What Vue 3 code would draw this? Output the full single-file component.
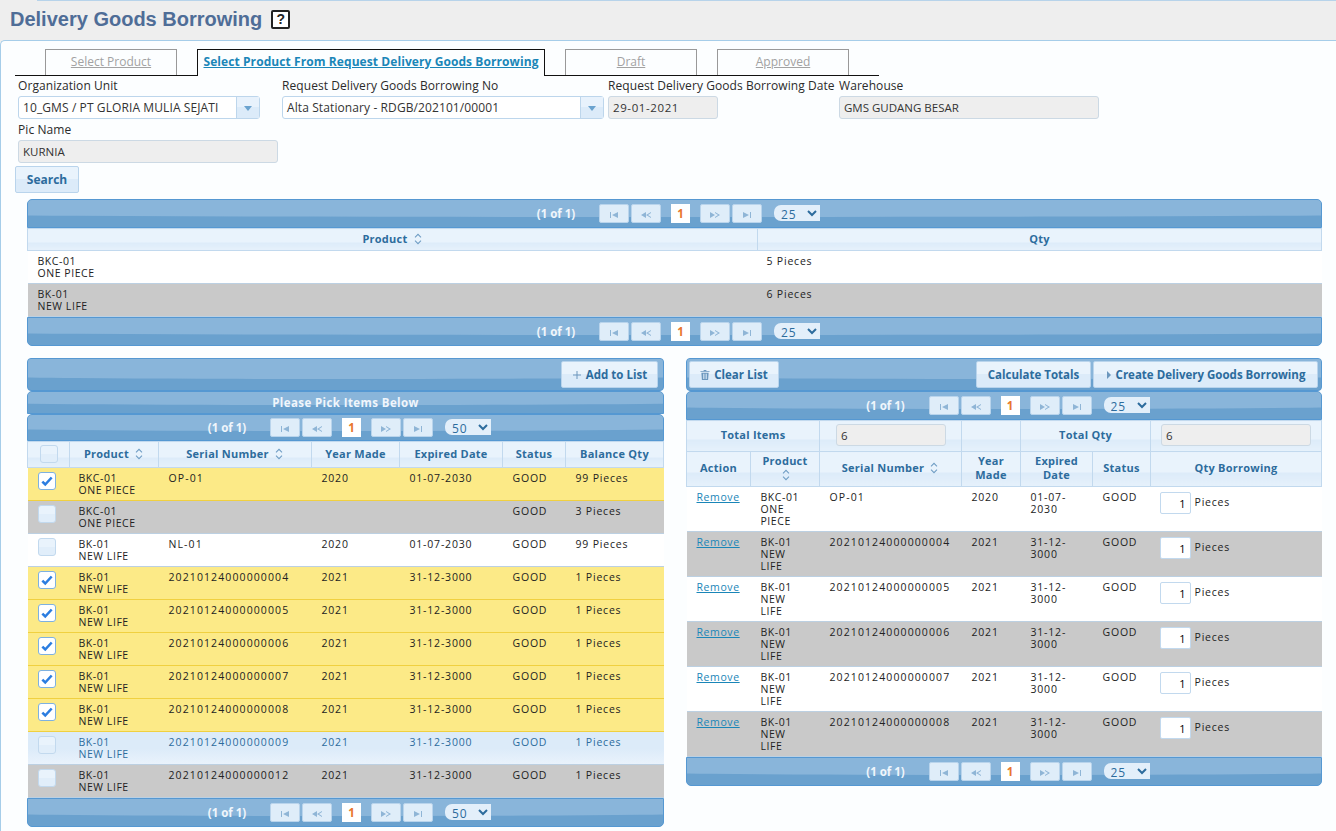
<script setup>
import { ref } from 'vue'

const tabs = [
  { label: 'Select Product' },
  { label: 'Select Product From Request Delivery Goods Borrowing', active: true },
  { label: 'Draft' },
  { label: 'Approved' }
]

const summary = [
  { code: 'BKC-01', name: 'ONE PIECE', qty: '5 Pieces' },
  { code: 'BK-01', name: 'NEW LIFE', qty: '6 Pieces' }
]

// kind: picked = kuning, hover = biru, sisanya selang-seling
const items = ref([
  { code: 'BKC-01', name: 'ONE PIECE', serial: 'OP-01', year: '2020', exp: '01-07-2030', bal: '99 Pieces', kind: 'picked' },
  { code: 'BKC-01', name: 'ONE PIECE', serial: '', year: '', exp: '', bal: '3 Pieces', kind: 'gray' },
  { code: 'BK-01', name: 'NEW LIFE', serial: 'NL-01', year: '2020', exp: '01-07-2030', bal: '99 Pieces', kind: 'white' },
  { code: 'BK-01', name: 'NEW LIFE', serial: '20210124000000004', year: '2021', exp: '31-12-3000', bal: '1 Pieces', kind: 'picked' },
  { code: 'BK-01', name: 'NEW LIFE', serial: '20210124000000005', year: '2021', exp: '31-12-3000', bal: '1 Pieces', kind: 'picked' },
  { code: 'BK-01', name: 'NEW LIFE', serial: '20210124000000006', year: '2021', exp: '31-12-3000', bal: '1 Pieces', kind: 'picked' },
  { code: 'BK-01', name: 'NEW LIFE', serial: '20210124000000007', year: '2021', exp: '31-12-3000', bal: '1 Pieces', kind: 'picked' },
  { code: 'BK-01', name: 'NEW LIFE', serial: '20210124000000008', year: '2021', exp: '31-12-3000', bal: '1 Pieces', kind: 'picked' },
  { code: 'BK-01', name: 'NEW LIFE', serial: '20210124000000009', year: '2021', exp: '31-12-3000', bal: '1 Pieces', kind: 'hover' },
  { code: 'BK-01', name: 'NEW LIFE', serial: '20210124000000012', year: '2021', exp: '31-12-3000', bal: '1 Pieces', kind: 'gray' }
])

const list = ref([
  { code: 'BKC-01', name: 'ONE PIECE', serial: 'OP-01', year: '2020', exp: '01-07-2030', qty: 1 },
  { code: 'BK-01', name: 'NEW LIFE', serial: '20210124000000004', year: '2021', exp: '31-12-3000', qty: 1 },
  { code: 'BK-01', name: 'NEW LIFE', serial: '20210124000000005', year: '2021', exp: '31-12-3000', qty: 1 },
  { code: 'BK-01', name: 'NEW LIFE', serial: '20210124000000006', year: '2021', exp: '31-12-3000', qty: 1 },
  { code: 'BK-01', name: 'NEW LIFE', serial: '20210124000000007', year: '2021', exp: '31-12-3000', qty: 1 },
  { code: 'BK-01', name: 'NEW LIFE', serial: '20210124000000008', year: '2021', exp: '31-12-3000', qty: 1 }
])
</script>

<template>
  <div class="page">
    <svg class="defs" width="0" height="0">
      <symbol id="first" viewBox="0 0 12 8"><path d="M2 1v6h1V1zM10 1 4 4l6 3z" /></symbol>
      <symbol id="prev" viewBox="0 0 12 8"><path d="M6 1 1 4l5 3zM11 1 6 4l5 3V6L8 4l3-2z" /></symbol>
      <symbol id="next" viewBox="0 0 12 8"><path d="M1 1v6l5-3zM6 1v1l3 2-3 2v1l5-3z" /></symbol>
      <symbol id="last" viewBox="0 0 12 8"><path d="M2 1v6l6-3zM9 1v6h1V1z" /></symbol>
      <symbol id="sort" viewBox="0 0 10 14">
        <path d="M1.500 5 5 1.500 8.500 5M1.500 9 5 12.500 8.500 9" fill="none" stroke="currentColor" stroke-width="1.200" />
      </symbol>
    </svg>

    <div class="topline"></div>
    <header class="head">
      <h1>Delivery Goods Borrowing</h1>
      <span class="help">?</span>
    </header>

    <main class="main">
      <nav class="tabs">
        <a v-for="t in tabs" :key="t.label" class="tab" :class="{ active: t.active }">{{ t.label }}</a>
      </nav>

      <div class="form">
        <div class="field">
          <label>Organization Unit</label>
          <div class="combo w242">
            <span>10_GMS / PT GLORIA MULIA SEJATI</span>
            <i class="arrow"></i>
          </div>
        </div>
        <div class="field">
          <label>Request Delivery Goods Borrowing No</label>
          <div class="combo w322">
            <span>Alta Stationary - RDGB/202101/00001</span>
            <i class="arrow"></i>
          </div>
        </div>
        <div class="field">
          <label class="nowrap">Request Delivery Goods Borrowing Date</label>
          <div class="readonly w110 spaced">29-01-2021</div>
        </div>
        <div class="field">
          <label>Warehouse</label>
          <div class="readonly w260">GMS GUDANG BESAR</div>
        </div>
      </div>
      <div class="field pic">
        <label>Pic Name</label>
        <div class="readonly w260">KURNIA</div>
      </div>
      <button class="btn search">Search</button>

      <section class="panel summary">
        <div class="bar pager">
          <span class="count">(1 of 1)</span>
          <span class="pg"><svg><use href="#first" /></svg></span>
          <span class="pg"><svg><use href="#prev" /></svg></span>
          <span class="cur">1</span>
          <span class="pg"><svg><use href="#next" /></svg></span>
          <span class="pg"><svg><use href="#last" /></svg></span>
          <select class="size"><option>25</option></select>
        </div>
        <table class="grid">
          <colgroup><col style="width: 730px" /><col /></colgroup>
          <thead>
            <tr class="h22">
              <th>Product <svg class="sort"><use href="#sort" /></svg></th>
              <th>Qty</th>
            </tr>
          </thead>
          <tbody>
            <tr v-for="(s, i) in summary" :key="s.code" class="r33" :class="i % 2 ? 'gray' : 'white'">
              <td class="prod">{{ s.code }}<br />{{ s.name }}</td>
              <td class="pl9">{{ s.qty }}</td>
            </tr>
          </tbody>
        </table>
        <div class="bar pager bottom">
          <span class="count">(1 of 1)</span>
          <span class="pg"><svg><use href="#first" /></svg></span>
          <span class="pg"><svg><use href="#prev" /></svg></span>
          <span class="cur">1</span>
          <span class="pg"><svg><use href="#next" /></svg></span>
          <span class="pg"><svg><use href="#last" /></svg></span>
          <select class="size"><option>25</option></select>
        </div>
      </section>

      <div class="columns">
        <section class="panel left">
          <div class="bar toolbar">
            <span class="spacer"></span>
            <button class="btn tool w97">
              <svg class="ico" viewBox="0 0 10 10"><path d="M4.500 1v3.500H1v1h3.500V9h1V5.500H9v-1H5.500V1z" /></svg>
              Add to List
            </button>
          </div>
          <div class="bar caption"><span>Please Pick Items Below</span></div>
          <div class="bar pager h27">
            <span class="count">(1 of 1)</span>
            <span class="pg"><svg><use href="#first" /></svg></span>
            <span class="pg"><svg><use href="#prev" /></svg></span>
            <span class="cur">1</span>
            <span class="pg"><svg><use href="#next" /></svg></span>
            <span class="pg"><svg><use href="#last" /></svg></span>
            <select class="size"><option>50</option></select>
          </div>
          <table class="grid">
            <colgroup>
              <col style="width: 42px" />
              <col style="width: 89px" />
              <col style="width: 153px" />
              <col style="width: 88px" />
              <col style="width: 103px" />
              <col style="width: 63px" />
              <col />
            </colgroup>
            <thead>
              <tr class="h26">
                <th><span class="check head-check"></span></th>
                <th>Product <svg class="sort"><use href="#sort" /></svg></th>
                <th>Serial Number <svg class="sort"><use href="#sort" /></svg></th>
                <th>Year Made</th>
                <th>Expired Date</th>
                <th>Status</th>
                <th>Balance Qty</th>
              </tr>
            </thead>
            <tbody>
              <tr v-for="it in items" :key="it.serial + it.bal" class="r33" :class="it.kind">
                <td class="check-cell">
                  <span class="check" :class="{ on: it.kind === 'picked' }">
                    <svg v-if="it.kind === 'picked'" viewBox="0 0 12 12"><path d="M2 6.500 4.500 9 10 3" fill="none" stroke="currentColor" stroke-width="2.200" /></svg>
                  </span>
                </td>
                <td class="prod pl9">{{ it.code }}<br />{{ it.name }}</td>
                <td class="serial">{{ it.serial }}</td>
                <td>{{ it.year }}</td>
                <td>{{ it.exp }}</td>
                <td>GOOD</td>
                <td>{{ it.bal }}</td>
              </tr>
            </tbody>
          </table>
          <div class="bar pager bottom">
            <span class="count">(1 of 1)</span>
            <span class="pg"><svg><use href="#first" /></svg></span>
            <span class="pg"><svg><use href="#prev" /></svg></span>
            <span class="cur">1</span>
            <span class="pg"><svg><use href="#next" /></svg></span>
            <span class="pg"><svg><use href="#last" /></svg></span>
            <select class="size"><option>50</option></select>
          </div>
        </section>

        <section class="panel right">
          <div class="bar toolbar">
            <button class="btn tool w90">
              <svg class="ico" viewBox="0 0 10 11"><path d="M3.500 0h3v1H10v1H0V1h3.500zM1 3h8l-.6 8H1.600zM3 4v6h.8V4zM4.600 4v6h.8V4zM6.200 4v6H7V4z" /></svg>
              Clear List
            </button>
            <span class="spacer"></span>
            <button class="btn tool w115">Calculate Totals</button>
            <button class="btn tool w225">
              <svg class="ico small" viewBox="0 0 6 10"><path d="M1 1v8l4-4z" /></svg>
              Create Delivery Goods Borrowing
            </button>
          </div>
          <div class="bar pager">
            <span class="count">(1 of 1)</span>
            <span class="pg"><svg><use href="#first" /></svg></span>
            <span class="pg"><svg><use href="#prev" /></svg></span>
            <span class="cur">1</span>
            <span class="pg"><svg><use href="#next" /></svg></span>
            <span class="pg"><svg><use href="#last" /></svg></span>
            <select class="size"><option>25</option></select>
          </div>
          <table class="grid">
            <colgroup>
              <col style="width: 64px" />
              <col style="width: 69px" />
              <col style="width: 142px" />
              <col style="width: 59px" />
              <col style="width: 72px" />
              <col style="width: 58px" />
              <col />
            </colgroup>
            <thead>
              <tr class="h31">
                <th colspan="2">Total Items</th>
                <th class="total-cell"><div class="readonly total w110">6</div></th>
                <th></th>
                <th colspan="2">Total Qty</th>
                <th class="total-cell"><div class="readonly total wide">6</div></th>
              </tr>
              <tr class="h35">
                <th>Action</th>
                <th>Product<br /><svg class="sort"><use href="#sort" /></svg></th>
                <th>Serial Number <svg class="sort"><use href="#sort" /></svg></th>
                <th>Year<br />Made</th>
                <th>Expired<br />Date</th>
                <th>Status</th>
                <th>Qty Borrowing</th>
              </tr>
            </thead>
            <tbody>
              <tr v-for="(l, i) in list" :key="l.serial" class="r45" :class="i % 2 ? 'gray' : 'white'">
                <td><a class="remove">Remove</a></td>
                <td class="prod">{{ l.code }}<br />{{ l.name }}</td>
                <td class="serial">{{ l.serial }}</td>
                <td>{{ l.year }}</td>
                <td>{{ l.exp }}</td>
                <td>GOOD</td>
                <td class="qty-cell">
                  <input class="qty" v-model="l.qty" />
                  <span>Pieces</span>
                </td>
              </tr>
            </tbody>
          </table>
          <div class="bar pager bottom">
            <span class="count">(1 of 1)</span>
            <span class="pg"><svg><use href="#first" /></svg></span>
            <span class="pg"><svg><use href="#prev" /></svg></span>
            <span class="cur">1</span>
            <span class="pg"><svg><use href="#next" /></svg></span>
            <span class="pg"><svg><use href="#last" /></svg></span>
            <select class="size"><option>25</option></select>
          </div>
        </section>
      </div>
    </main>
  </div>
</template>

<style>
html,
body {
  margin: 0;
  background: #fff;
}
</style>

<style scoped>
.page {
  width: 1336px;
  height: 831px;
  overflow: hidden;
  position: relative;
  background: #eee;
  font-family: "Open Sans", "Noto Sans", sans-serif;
  font-size: 12px;
  color: #222;
}

.defs {
  position: absolute;
}

.topline {
  height: 1px;
  margin-left: 37px;
  background: #b7d3ea;
}

.head {
  height: 39px;
  display: flex;
  align-items: center;
  padding-left: 10px;
  gap: 9px;
  box-sizing: border-box;
  padding-bottom: 2px;
}

.head h1 {
  margin: 0;
  font-family: "Liberation Sans", Arial, sans-serif;
  font-size: 20px;
  font-weight: bold;
  color: #4f6d97;
}

.help {
  width: 15px;
  height: 15px;
  border: 2px solid #222;
  border-radius: 2px;
  font-family: "Liberation Sans", Arial, sans-serif;
  font-size: 14px;
  font-weight: bold;
  line-height: 15px;
  text-align: center;
  color: #222;
  background: #fff;
}

.main {
  height: 791px;
  box-sizing: border-box;
  background: #fcfeff;
  border: 1px solid #a6cde9;
  border-width: 1px 0 0 1px;
  border-top-left-radius: 5px;
  padding-top: 8px;
}

.tabs {
  display: flex;
  gap: 20px;
  width: 864px;
  height: 27px;
  box-sizing: border-box;
  margin-left: 14px;
  padding-left: 30px;
  border-bottom: 1px solid #111;
}

.tab {
  width: 132px;
  height: 26px;
  box-sizing: border-box;
  border: 1px solid #999;
  border-bottom: 0;
  text-align: center;
  line-height: 24px;
  color: #a2a2a2;
  text-decoration: underline;
}

.tab.active {
  width: 348px;
  height: 27px;
  background: #fcfeff;
  border-color: #111;
  color: #1a86b8;
  font-weight: bold;
  letter-spacing: .08px;
}

.form {
  display: grid;
  grid-template-columns: 264px 326px 231px 260px;
  padding-left: 17px;
  padding-top: 2px;
}

.field label {
  display: block;
  height: 18px;
  line-height: 15px;
  letter-spacing: .07px;
  color: #2b2b2b;
}

.nowrap {
  white-space: nowrap;
}

.pic {
  margin-left: 17px;
  margin-top: 3px;
}

.combo,
.readonly {
  height: 23px;
  box-sizing: border-box;
  border: 1px solid #bdd6ec;
  border-radius: 3px;
  line-height: 21px;
  padding-left: 4px;
  font-size: 11.500px;
  color: #333;
}

.combo {
  display: flex;
  justify-content: space-between;
  background: #fff;
  font-size: 12px;
  letter-spacing: .1px;
}

.readonly {
  background: #eee;
  border-color: #ccd9e4;
}

.spaced {
  letter-spacing: .6px;
}

.arrow {
  width: 22px;
  position: relative;
  background: linear-gradient(#e8f2fc 50%, #dcebf9 50%);
  border-left: 1px solid #bdd6ec;
}

.arrow::after {
  content: "";
  position: absolute;
  left: 7px;
  top: 9px;
  border: 4px solid transparent;
  border-top: 5px solid #6ba3cf;
  border-bottom: 0;
}

.w242 { width: 242px; }
.w322 { width: 322px; }
.w110 { width: 110px; }
.w260 { width: 260px; }

.btn {
  font-family: inherit;
  font-weight: bold;
  font-size: 11.500px;
  color: #2d6c9d;
  background: linear-gradient(#e9f3fc 50%, #dcebf9 50%);
  border: 1px solid #b9d4ec;
  border-radius: 2px;
  cursor: pointer;
}

.search {
  display: block;
  width: 64px;
  height: 27px;
  margin: 3px 0 0 14px;
  font-size: 12px;
}

.panel {
  display: flex;
  flex-direction: column;
}

.summary {
  margin: 6px 14px 0 26px;
}

.bar {
  position: relative;
  box-sizing: border-box;
  background: #6aa1ce;
  border: 1px solid #5598d2;
  border-radius: 5px 5px 0 0;
  overflow: hidden;
  flex: none;
}

.bar::before {
  content: "";
  position: absolute;
  left: -10%;
  right: -10%;
  top: -10px;
  bottom: 36%;
  background: #89b5da;
  border-radius: 0 0 50% 50% / 0 0 12% 12%;
}

.bar > * {
  position: relative;
}

.bar.bottom {
  border-radius: 0 0 5px 5px;
}

.pager {
  display: flex;
  align-items: center;
  justify-content: center;
  gap: 2px;
  height: 29px;
  padding-left: 6px;
}

.pager.h27 { height: 27px; }

.count {
  min-width: 42px;
  text-align: center;
  color: #f0f6fc;
  font-weight: bold;
  font-size: 11.500px;
  margin-right: 20px;
}

.pg {
  display: flex;
  align-items: center;
  justify-content: center;
  width: 30px;
  height: 19px;
  box-sizing: border-box;
  background: #dfedf9;
  border: 1px solid #b9d4ec;
  border-radius: 2px;
  color: #8fb5d6;
}

.pg svg {
  width: 12px;
  height: 8px;
  fill: currentColor;
  margin-top: 2px;
}

.cur {
  width: 19px;
  height: 19px;
  margin: 0 8px;
  background: #fff;
  color: #e8762d;
  text-align: center;
  line-height: 19px;
  font-weight: bold;
  font-size: 11.500px;
}

.size {
  width: 46px;
  height: 16px;
  margin: -1px 0 0 10px;
  padding: 0 0 0 3px;
  border: 0;
  border-radius: 7px 0 0 7px;
  background: #e3effa;
  color: #2d6c9d;
  font-family: inherit;
  font-size: 12px;
  letter-spacing: 1px;
}

.grid {
  width: 100%;
  table-layout: fixed;
  border-collapse: collapse;
  font-size: 10.500px;
  letter-spacing: .8px;
}

.grid th {
  padding: 0 0 2px;
  font-size: 11px;
  letter-spacing: .25px;
  color: #2d6c9d;
  text-align: center;
  background: linear-gradient(#e9f3fc 60%, #dcebf9 60%, #e6f1fb);
  border: 1px solid #c2d9ee;
  line-height: 14px;
}

.h22 { height: 22px; }
.h26 { height: 26px; }
.h31 { height: 31px; }
.h35 { height: 35px; }

.sort {
  width: 10px;
  height: 12px;
  vertical-align: -2px;
  color: #6f9dc4;
  margin-left: 2px;
}

.grid td {
  vertical-align: top;
  padding: 4px 10px 0;
  line-height: 12px;
  border-bottom: 1px solid #bcd0e2;
  overflow: hidden;
}

.grid td.prod {
  letter-spacing: .55px;
}

.grid td.pl9 {
  padding-left: 9px;
}

.grid td.serial {
  letter-spacing: 1.100px;
}

.r33 { height: 33px; }
.r45 { height: 45px; }

.white { background: #fff; }
.gray { background: #c9c9c9; }
.picked { background: #fcea87; }
.picked td { border-bottom-color: #f0d040 !important; }
.hover {
  background: linear-gradient(#dcebf9 50%, #eaf3fc);
  color: #2d6c9d;
}

.grid td.check-cell {
  padding: 4px 0 0 10px;
}

.check {
  display: block;
  width: 18px;
  height: 18px;
  box-sizing: border-box;
  border: 1px solid #c2d9ee;
  border-radius: 3px;
  background: linear-gradient(#e9f3fc 50%, #e1eefa 50%);
}

.check svg {
  display: block;
  width: 14px;
  height: 14px;
  margin: 1px;
}

.check.on {
  background: #fff;
  border-color: #7eb1e0;
  color: #2b7de0;
}

.head-check {
  margin: 0 auto;
}

.total-cell {
  text-align: left !important;
}

.total {
  margin-left: 16px;
  height: 22px;
  font-weight: normal;
  text-align: left;
  letter-spacing: 0;
  width: 110px;
}

.wide {
  margin-left: 10px;
  width: 150px;
}

.remove {
  color: #1a86b8;
  text-decoration: underline;
  letter-spacing: .6px;
}

.grid td.qty-cell {
  padding-top: 5px;
  padding-left: 9px;
}

.qty {
  width: 31px;
  height: 22px;
  box-sizing: border-box;
  border: 1px solid #c2d9ee;
  border-radius: 2px;
  padding: 0 4px;
  text-align: right;
  font-family: inherit;
  font-size: 11px;
  margin-right: 4px;
  vertical-align: middle;
}

.columns {
  display: flex;
  gap: 22px;
  margin: 12px 14px 0 26px;
}

.left {
  width: 637px;
}

.right {
  width: 636px;
}

.toolbar {
  display: flex;
  align-items: center;
  height: 33px;
  gap: 2px;
  border-radius: 4px;
}

.left .toolbar {
  padding: 0 5px;
}

.right .toolbar {
  padding: 0 3px 0 2px;
}

.spacer {
  flex: 1;
}

.tool {
  height: 27px;
  padding: 0;
  display: flex;
  align-items: center;
  justify-content: center;
  gap: 4px;
}

.w97 { width: 97px; }
.w90 { width: 90px; }
.w115 { width: 115px; }
.w225 { width: 225px; }

.ico {
  width: 10px;
  height: 10px;
  fill: #6c97bd;
}

.ico.small {
  width: 6px;
}

.caption {
  height: 23px;
  text-align: center;
  color: #f0f6fc;
  font-weight: bold;
  font-size: 11.500px;
  line-height: 21px;
  letter-spacing: .4px;
}
</style>
